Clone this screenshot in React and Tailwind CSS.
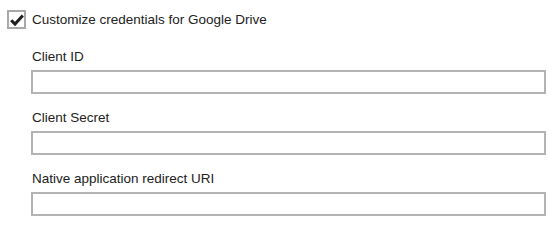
export default function App() {
  const fields = ['Client ID', 'Client Secret', 'Native application redirect URI'];

  return (
    <div
      className="w-[555px] h-[225px] bg-white text-[13.5px] text-[#222]"
      style={{ fontFamily: '"Liberation Sans", Arial, sans-serif' }}
    >
      {/* Checkbox row */}
      <label className="flex items-center pt-[10px] pl-[7px]">
        <span className="flex h-[19px] w-[19px] items-center justify-center border-2 border-[#a8a8a8] bg-white">
          <svg viewBox="0 0 14 14" className="h-[14px] w-[14px]">
            <path d="M1.2 7.2 L5 11 L12.8 2.6" fill="none" stroke="#1e1e1e" strokeWidth="3" />
          </svg>
        </span>
        <span className="ml-[6px] leading-[19px]">Customize credentials for Google Drive</span>
      </label>

      {/* Fields */}
      <div className="pl-[31px] pr-[9px] pt-[20px] flex flex-col gap-[16px]">
        {fields.map((f) => (
          <div key={f} className="flex flex-col">
            <span className="pl-[1px] leading-[15px]">{f}</span>
            <input
              type="text"
              className="mt-[6px] h-[24px] w-[515px] border-2 border-[#b3b3b3] bg-white outline-none"
            />
          </div>
        ))}
      </div>
    </div>
  );
}
